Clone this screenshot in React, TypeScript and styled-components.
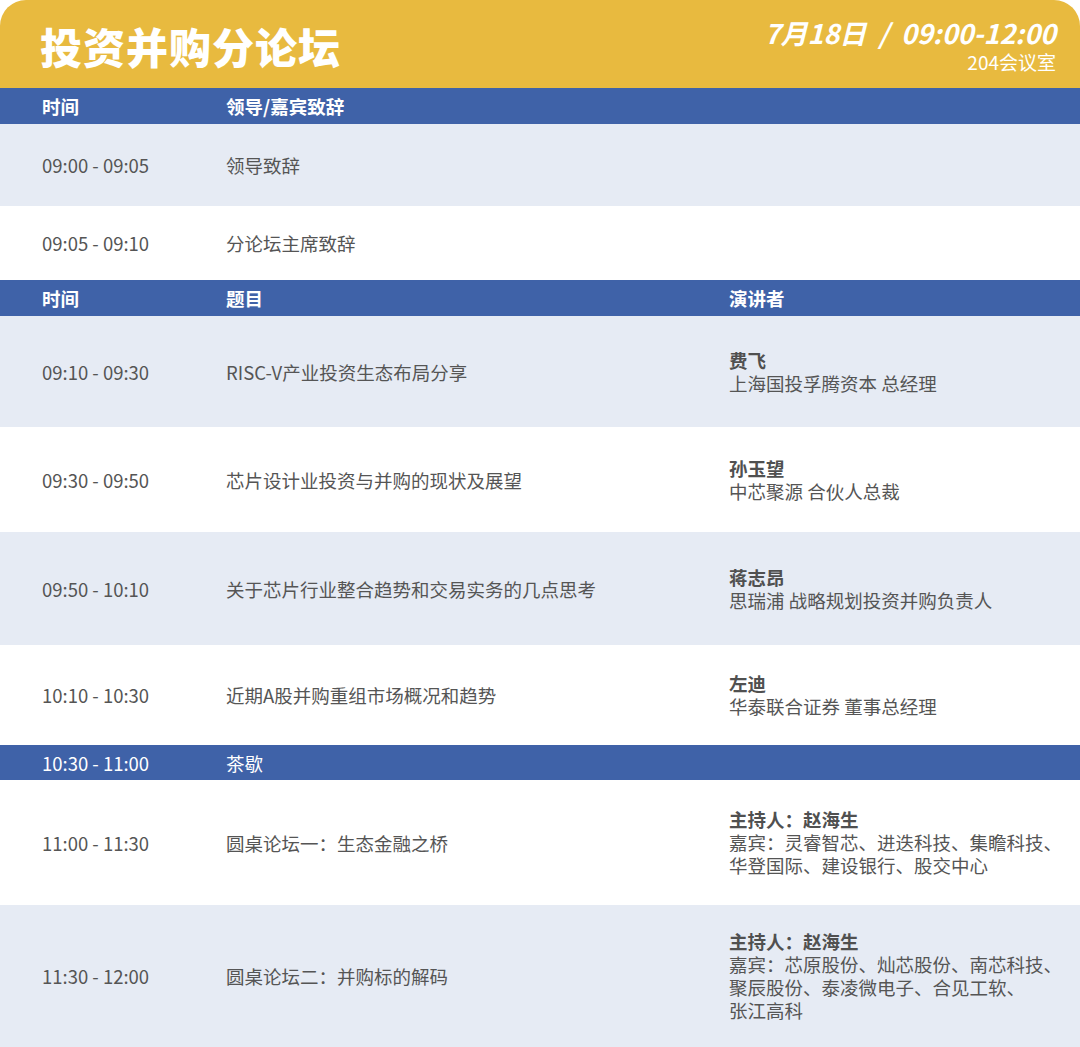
import React from "react";
import styled, { createGlobalStyle } from "styled-components";

const G = createGlobalStyle`
  body { margin: 0; background: #fff; font-family: "Noto Sans CJK SC", "Noto Sans", sans-serif; }
`;
const Page = styled.div`width: 1080px; height: 1047px; overflow: hidden; background: #fff;`;
const Top = styled.div`
  height: 88px; background: #e8ba3f; border-radius: 26px 26px 0 0;
  display: flex; justify-content: space-between; align-items: center; padding: 0 24px 0 40px; color: #fff;
`;
const Title = styled.div`font-size: 42px; font-weight: 900; letter-spacing: 1px; margin-top: 2px;`;
const Right = styled.div`display: flex; flex-direction: column; align-items: flex-end; margin-top: 4px; gap: 2px;`;
const When = styled.div`font-size: 27px; font-weight: 700; font-style: italic; line-height: 30px; word-spacing: 6px;`;
const Room = styled.div`font-size: 19px; line-height: 24px;`;
const Row = styled.div<{ $bg: string; $h: number }>`
  height: ${p => p.$h}px; background: ${p => p.$bg};
  display: grid; grid-template-columns: 184px 503px 1fr; align-items: center; padding-left: 42px;
  color: ${p => (p.$bg === "#3f62a8" ? "#fff" : "#555")}; font-size: 18.5px;
`;
const Head = styled.div<{ $bold: boolean }>`font-weight: ${p => (p.$bold ? 700 : 400)};`;
const Sp = styled.div`line-height: 23px;`;
const Name = styled.div`font-weight: 700; color: #505050;`;

const B = "#3f62a8", L = "#e6ebf4", W = "#fff";
const rows: [string, number, string, string, string[]?][] = [
  [B, 36, "时间", "领导/嘉宾致辞"],
  [L, 82, "09:00 - 09:05", "领导致辞"],
  [W, 74, "09:05 - 09:10", "分论坛主席致辞"],
  [B, 36, "时间", "题目", ["演讲者"]],
  [L, 111, "09:10 - 09:30", "RISC-V产业投资生态布局分享", ["费飞", "上海国投孚腾资本 总经理"]],
  [W, 105, "09:30 - 09:50", "芯片设计业投资与并购的现状及展望", ["孙玉望", "中芯聚源 合伙人总裁"]],
  [L, 113, "09:50 - 10:10", "关于芯片行业整合趋势和交易实务的几点思考", ["蒋志昂", "思瑞浦 战略规划投资并购负责人"]],
  [W, 100, "10:10 - 10:30", "近期A股并购重组市场概况和趋势", ["左迪", "华泰联合证券 董事总经理"]],
  [B, 35, "10:30 - 11:00", "茶歇"],
  [W, 125, "11:00 - 11:30", "圆桌论坛一：生态金融之桥", ["主持人：赵海生", "嘉宾：灵睿智芯、进迭科技、集瞻科技、", "华登国际、建设银行、股交中心"]],
  [L, 142, "11:30 - 12:00", "圆桌论坛二：并购标的解码", ["主持人：赵海生", "嘉宾：芯原股份、灿芯股份、南芯科技、", "聚辰股份、泰凌微电子、合见工软、", "张江高科"]],
];

export default function App() {
  return (
    <Page>
      <G />
      <Top>
        <Title>投资并购分论坛</Title>
        <Right>
          <When>7月18日 / 09:00-12:00</When>
          <Room>204会议室</Room>
        </Right>
      </Top>
      {rows.map(([bg, h, t, s, sp], i) => {
        const hdr = bg === B;
        const boldHdr = hdr && t === "时间";
        return (
          <Row key={i} $bg={bg} $h={h}>
            <Head $bold={boldHdr}>{t}</Head>
            <Head $bold={boldHdr}>{s}</Head>
            <Sp>
              {sp && (hdr ? <Head $bold>{sp[0]}</Head> : <><Name>{sp[0]}</Name>{sp.slice(1).map((x, j) => <div key={j}>{x}</div>)}</>)}
            </Sp>
          </Row>
        );
      })}
    </Page>
  );
}
